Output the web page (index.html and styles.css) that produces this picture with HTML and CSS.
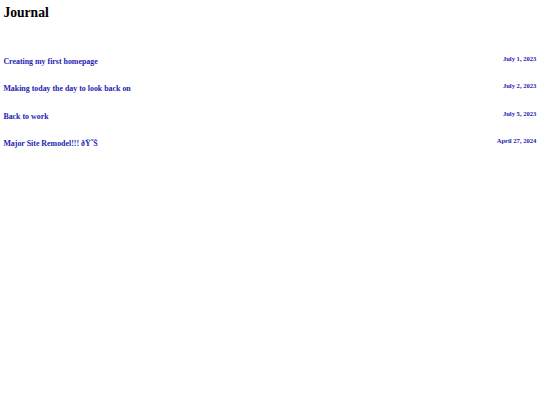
FILE: index.html
```html
<!DOCTYPE html>
<html>
<head>
<meta charset="utf-8">
<title>Journal</title>
<link rel="stylesheet" href="styles.css">
</head>
<body>
<h1 class="title">Journal</h1>
<div class="entries">
  <div class="entry"><a class="entry-link" href="#">Creating my first homepage</a><span class="entry-date">July 1, 2023</span></div>
  <div class="entry"><a class="entry-link" href="#">Making today the day to look back on</a><span class="entry-date">July 2, 2023</span></div>
  <div class="entry"><a class="entry-link" href="#">Back to work</a><span class="entry-date">July 5, 2023</span></div>
  <div class="entry"><a class="entry-link" href="#">Major Site Remodel!!! &#xF0;&#x178;&#x2DC;&#x160;</a><span class="entry-date">April 27, 2024</span></div>
</div>
</body>
</html>
```
FILE: styles.css
```css
html, body {
  margin: 0;
  padding: 0;
  background: #ffffff;
}
body {
  font-family: "Liberation Serif", "Times New Roman", serif;
  color: #000000;
  padding: 5px 3.6px 0 3.4px;
}
.title {
  margin: 0;
  font-size: 13.6px;
  line-height: 15px;
  font-weight: bold;
}
.entries {
  display: flex;
  flex-direction: column;
  margin-top: 35px;
}
.entry {
  display: flex;
  justify-content: space-between;
  align-items: flex-start;
  height: 27.33px;
}
.entry-link {
  color: #1c1cb4;
  text-decoration: none;
  font-weight: bold;
  font-size: 7.9px;
  line-height: 9px;
  padding-top: 2px;
}
.entry-date {
  color: #1c1cb4;
  font-weight: bold;
  font-size: 6.6px;
  line-height: 7px;
}
```
